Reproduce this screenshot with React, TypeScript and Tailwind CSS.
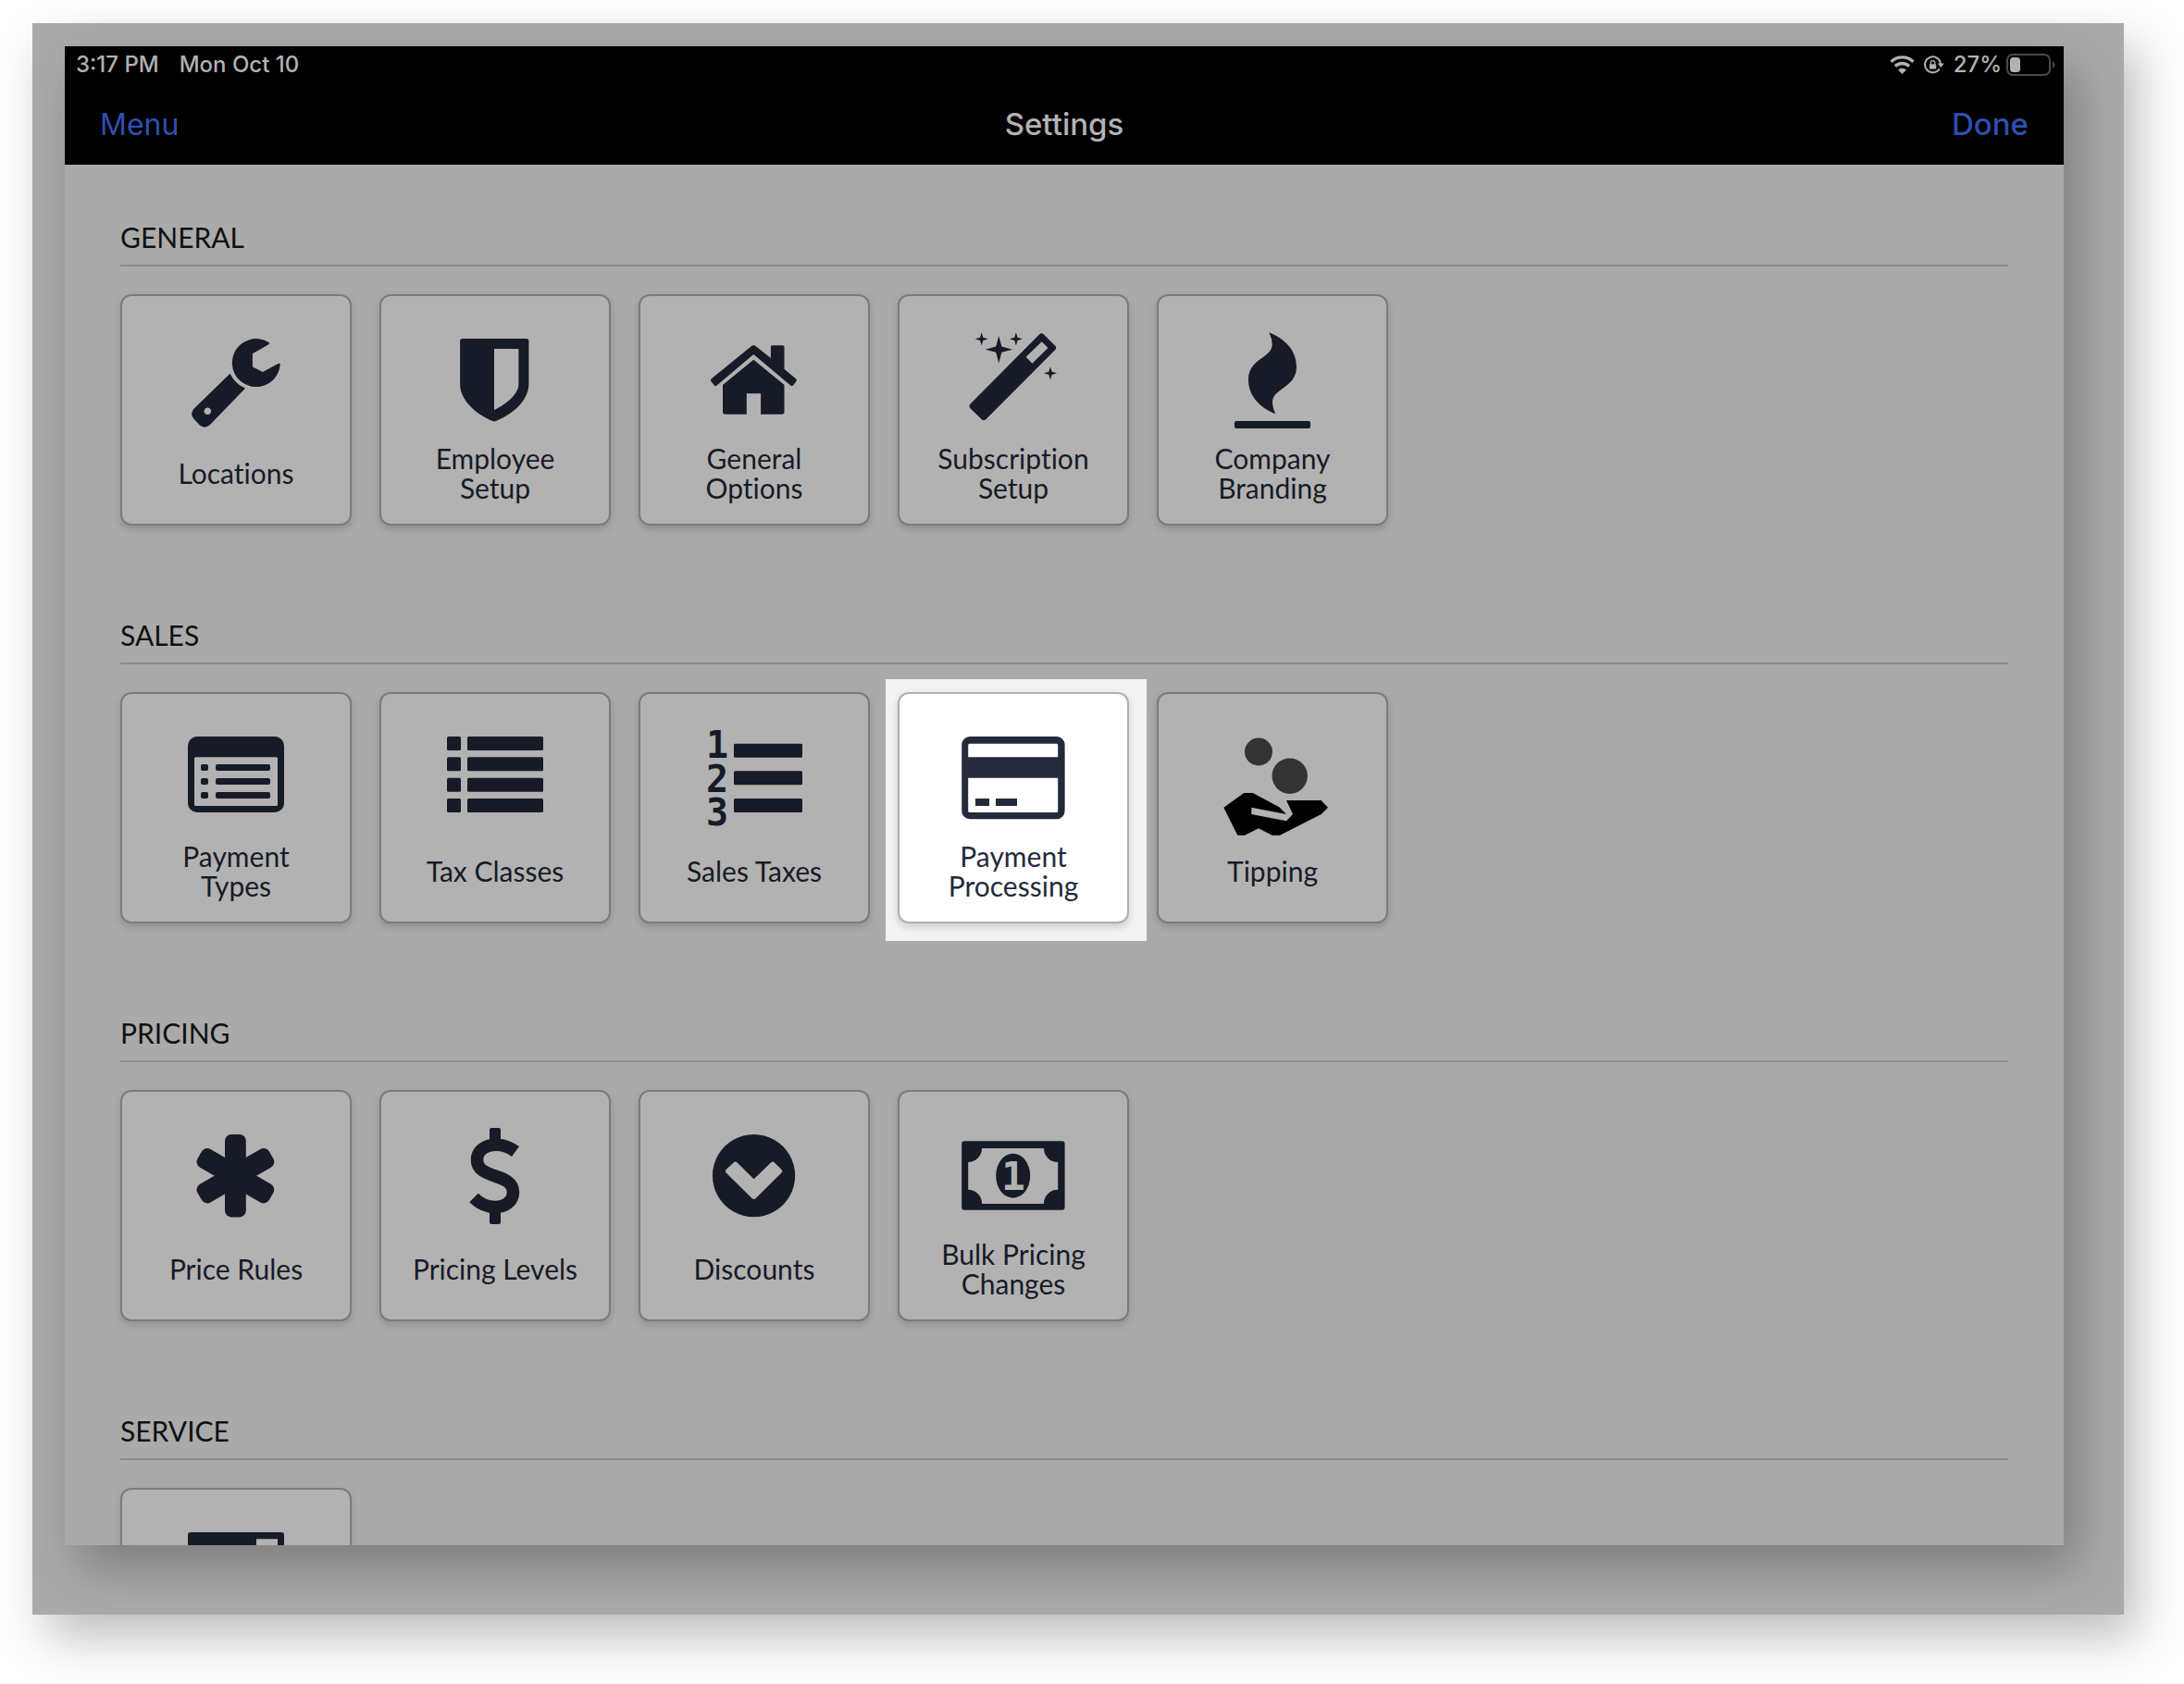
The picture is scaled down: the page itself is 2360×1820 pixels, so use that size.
import type { ReactNode } from "react";

type Tile = {
  id: string;
  label: string;
  icon: ReactNode;
  active?: boolean;
};

const Icon = ({ children }: { children: ReactNode }) => (
  <svg
    viewBox="0 0 120 120"
    fill="currentColor"
    aria-hidden="true"
    className="size-[120px] shrink-0 overflow-visible"
  >
    {children}
  </svg>
);

const Wrench = () => (
  <Icon>
    <path d="M95.3 19.9a26 26 0 1 0 12.4 24.4q.2-2.2-2-1.2L88.9 52l-11-5.6V32.3l17.4-10q1.6-1.2 0-2.4Z" />
    <path
      fillRule="evenodd"
      d="M53.6 53.7A32 32 0 0 0 70 69.7L32 109q-5.7 5-11.2.6l-6.3-6.8q-5-5.7.3-11.2ZM29.3 90.5a3.8 3.8 0 1 0 .1 0Z"
    />
  </Icon>
);

const Shield = () => (
  <Icon>
    <path
      fillRule="evenodd"
      d="M24.6 16h69.3a2.5 2.5 0 0 1 2.5 2.5V65c0 18-18 33-35.4 40q-1.8.8-3.6 0C40 98 22.1 83 22.1 65V18.5a2.5 2.5 0 0 1 2.5-2.5ZM59 27v66.3C71 87 85.4 77 85.4 65V27Z"
    />
  </Icon>
);

const Home = () => (
  <Icon>
    <path d="M56.5 24.4q2.8-2.2 5.6 0L77.9 37V25q0-1.7 1.7-1.7h11.2q1.7 0 1.7 1.7v24l12.8 10.6q1.2 1.2.2 2.5l-3.5 4.4q-1.2 1.3-2.5.2L59.3 33 19.4 66.7q-1.3 1-2.5-.2l-3.6-4.4q-.9-1.4.2-2.5Z" />
    <path d="M59.3 38.7 92.5 66v29q0 2.7-2.7 2.7H67.1V75.3H51.8v22.4H28.7Q26 97.700 26 95V66Z" />
  </Icon>
);

const Wand = () => (
  <Icon>
    <path
      fillRule="evenodd"
      d="M88.3 11.2q2.2-2 4.3 0l12.7 12.6q1.8 2 0 4.3L30.3 103.2q-2.3 2-4.5 0L13.3 91.2q-1.8-2.2 0-4.4ZM90.7 19.3 73.6 35.7l6.8 7L97.5 26Z"
    />
    <path d="M44.3 13 47.4 24.6 59 27.7 47.4 30.8 44.3 42.4 41.2 30.8 29.7 27.7 41.2 24.6Z" />
    <path d="M25.7 9.2 27.3 14.7 32.8 16.3 27.3 17.9 25.7 23.4 24.1 17.9 18.6 16.3 24.1 14.7Z" />
    <path d="M62.9 9.2 64.5 14.7 70 16.3 64.5 17.9 62.9 23.4 61.3 17.9 55.8 16.3 61.3 14.7Z" />
    <path d="M100 46.2 101.6 51.7 107.1 53.3 101.6 54.9 100 60.4 98.4 54.9 92.9 53.3 98.4 51.7Z" />
  </Icon>
);

const Flame = () => (
  <Icon>
    <path d="M56.3 9.3C71 15 86 27 86 46.5 86 69 60 70 60 84.5q0 5.500 3.300 12.800C49 92 34 79.500 34 60.500 34 37 59.700 37.500 59.700 22q0-6-3.400-12.700Z" />
    <rect x="19" y="105" width="82" height="8" rx="2" />
  </Icon>
);

const ListWindow = () => (
  <Icon>
    <path
      fillRule="evenodd"
      d="M18 16h84a10 10 0 0 1 10 10v62a10 10 0 0 1-10 10H18A10 10 0 0 1 8 88V26a10 10 0 0 1 10-10ZM16.5 38.3q-1.5 0-1.5 1.5v49.7q0 1.5 1.5 1.5h87q1.5 0 1.5-1.5V39.8q0-1.5-1.5-1.5Z"
    />
    {[46, 61, 76].map((y) => (
      <g key={y}>
        <rect x="22" y={y} width="8" height="7" rx="2" />
        <rect x="38" y={y} width="59" height="7" rx="2" />
      </g>
    ))}
  </Icon>
);

const List = () => (
  <Icon>
    {[16, 38.3, 60.7, 83].map((y) => (
      <g key={y}>
        <rect x="8" y={y} width="15" height="15" rx="1.5" />
        <rect x="30" y={y} width="82" height="15" rx="1.5" />
      </g>
    ))}
  </Icon>
);

const NumberedList = () => (
  <Icon>
    <text
      textAnchor="middle"
      className="font-['DejaVu_Sans_Mono',monospace] text-[40px] font-bold"
    >
      <tspan x="20" y="39">1</tspan>
      <tspan x="20" y="76">2</tspan>
      <tspan x="20" y="112">3</tspan>
    </text>
    {[23.7, 53.3, 83].map((y) => (
      <rect key={y} x="38" y={y} width="74" height="15" rx="1.5" />
    ))}
  </Icon>
);

const CreditCard = () => (
  <Icon>
    <path
      fillRule="evenodd"
      d="M13 16h94a9 9 0 0 1 8.6 9v71.3a9 9 0 0 1-8.6 9H13a9 9 0 0 1-8.8-9V25A9 9 0 0 1 13 16ZM12.7 23.7q-1.5 0-1.5 1.5v13.1h97V25.2q0-1.5-1.5-1.5ZM11.2 60.7v35.8q0 1.5 1.5 1.5h94q1.5 0 1.5-1.5V60.7Z"
    />
    <rect x="19" y="83" width="15" height="8" />
    <rect x="41" y="83" width="23" height="8" />
  </Icon>
);

const Tipping = () => (
  <Icon>
    <circle cx="45" cy="32.5" r="15" fill="#333333" />
    <circle cx="78.7" cy="58.7" r="19.2" fill="#333333" />
    <path
      fill="#000000"
      d="M7.3 92.7 29.3 77h9.4l28.6 15.3L75 100 37.3 92.7v7.3L75 107.3l7-7.3-7-15h37.7l7.3 7.7-7.3 7.3-44.7 22.7h-8.3l-14.7-7.4-15 7.4h-7.7Z"
    />
  </Icon>
);

const Asterisk = () => (
  <Icon>
    {[0, 60, 120].map((deg) => (
      <rect
        key={deg}
        x="48"
        y="16"
        width="22.8"
        height="89.4"
        rx="7"
        transform={`rotate(${deg} 59.4 60.7)`}
      />
    ))}
  </Icon>
);

const Dollar = () => (
  <Icon>
    <rect x="54" y="9" width="12" height="18" rx="2" />
    <rect x="54" y="95" width="12" height="18" rx="2" />
    <path
      d="M82 34.500C76 30 69 27.200 61 27.200 49 27.200 40.500 34 40.500 43.500 40.500 65 79.500 57 79.500 78.500 79.500 88 71.500 94.500 60 94.500 50.500 94.500 43 90.500 37 84.500"
      fill="none"
      stroke="currentColor"
      strokeWidth="13.5"
    />
  </Icon>
);

const ChevronCircle = () => (
  <Icon>
    <path
      fillRule="evenodd"
      d="M59.5 16a44.6 44.6 0 1 0 .1 0ZM37.8 46.4q1.9-2 3.8 0L59.6 64.3 78 46.4q2-2 3.9 0L89.5 54q1.5 1.8 0 3.5L61.5 85.3q-1.9 1.6-3.8 0L29.6 57.500q-1.500-1.700 0-3.500Z"
    />
  </Icon>
);

const Banknote = () => (
  <Icon>
    <path
      fillRule="evenodd"
      d="M7.2 23.3h105.4q3 0 3 3v68.4q0 3-3 3H7.2q-3 0-3-3V26.3q0-3 3-3ZM26 31a15 15 0 0 1-14.8 15v29.7A15 15 0 0 1 26 91h67a15 15 0 0 1 15.2-15.3V46A15 15 0 0 1 93 31Z"
    />
    <ellipse cx="59.7" cy="60.7" rx="18.5" ry="24" />
    <text
      x="60"
      y="76"
      textAnchor="middle"
      className="fill-[#b2b2b2] font-['DejaVu_Sans_Mono',monospace] text-[43px] font-bold"
    >
      1
    </text>
  </Icon>
);

const Panel = () => (
  <Icon>
    <path
      fillRule="evenodd"
      d="M11 16h98q3 0 3 3v76q0 3-3 3H11q-3 0-3-3V19q0-3 3-3ZM82 23.3V46h23V23.3Z"
    />
  </Icon>
);

const sections: { title: string; tiles: Tile[] }[] = [
  {
    title: "General",
    tiles: [
      { id: "locations", label: "Locations", icon: <Wrench /> },
      { id: "employee", label: "Employee Setup", icon: <Shield /> },
      { id: "options", label: "General Options", icon: <Home /> },
      { id: "subscription", label: "Subscription Setup", icon: <Wand /> },
      { id: "branding", label: "Company Branding", icon: <Flame /> },
    ],
  },
  {
    title: "Sales",
    tiles: [
      { id: "payment-types", label: "Payment Types", icon: <ListWindow /> },
      { id: "tax-classes", label: "Tax Classes", icon: <List /> },
      { id: "sales-taxes", label: "Sales Taxes", icon: <NumberedList /> },
      {
        id: "processing",
        label: "Payment Processing",
        icon: <CreditCard />,
        active: true,
      },
      { id: "tipping", label: "Tipping", icon: <Tipping /> },
    ],
  },
  {
    title: "Pricing",
    tiles: [
      { id: "price-rules", label: "Price Rules", icon: <Asterisk /> },
      { id: "levels", label: "Pricing Levels", icon: <Dollar /> },
      { id: "discounts", label: "Discounts", icon: <ChevronCircle /> },
      { id: "bulk", label: "Bulk Pricing Changes", icon: <Banknote /> },
    ],
  },
  {
    title: "Service",
    tiles: [{ id: "service", label: "", icon: <Panel /> }],
  },
];

const tileBase =
  "relative flex size-[250px] flex-col items-center rounded-xl border-2 px-6 pt-[30px] pb-[14px] text-center text-[30px] leading-8 shadow-[0_4px_8px_rgba(0,0,0,0.16)]";

function SettingsTile({ id, label, icon, active }: Tile) {
  return (
    <div className="relative">
      {active && (
        <span className="absolute -top-[14px] -right-[19px] -bottom-[19px] -left-[13px] bg-[#f3f3f3]" />
      )}
      <button
        type="button"
        aria-label={label || id}
        className={
          active
            ? `${tileBase} border-[#a9b2b0] bg-white text-[#242a3b]`
            : `${tileBase} border-[#777d7b] bg-[#b2b2b2] text-[#171b27]`
        }
      >
        {icon}
        <span className="flex flex-1 items-center">{label}</span>
      </button>
    </div>
  );
}

function StatusBar() {
  return (
    <div className="flex h-10 items-center justify-between pr-2 pl-3 text-2xl font-medium text-[#b2b2b2]">
      <div className="flex gap-[22px]">
        <span>3:17 PM</span>
        <span>Mon Oct 10</span>
      </div>
      <div className="flex items-center">
        <svg width="27" height="20" viewBox="0 0 27 20" fill="none" aria-hidden="true">
          <path
            d="M1.5 6.8a17 17 0 0 1 24 0M5.9 11.6a10.7 10.7 0 0 1 15.2 0"
            stroke="currentColor"
            strokeWidth="3.4"
          />
          <path d="M9 15.5a6.4 6.4 0 0 1 9 0L13.5 20Z" fill="currentColor" />
        </svg>
        <svg
          width="22"
          height="20"
          viewBox="0 0 22 20"
          fill="none"
          aria-hidden="true"
          className="ml-[10px]"
        >
          <path
            d="M16.8 14.3A8.5 8.5 0 1 1 18 9"
            stroke="currentColor"
            strokeWidth="2"
          />
          <path d="M14.8 8.6h7L18.3 13Z" fill="currentColor" />
          <path d="M6 9.3h7.2v5.2H6Z" fill="currentColor" />
          <path d="M7.4 9.5V7.8a2.2 2.2 0 0 1 4.400 0v1.700" stroke="currentColor" strokeWidth="1.3" />
        </svg>
        <span className="ml-[10px]">27%</span>
        <svg
          width="54"
          height="24"
          viewBox="0 0 54 24"
          fill="none"
          aria-hidden="true"
          className="ml-[5px]"
        >
          <rect x="1" y="1" width="46" height="22" rx="6" stroke="#4a4a4a" strokeWidth="2" />
          <rect x="4" y="4" width="11" height="16" rx="3.5" fill="currentColor" />
          <path d="M50 8a4.5 4.5 0 0 1 0 8Z" fill="#4a4a4a" />
        </svg>
      </div>
    </div>
  );
}

export default function App() {
  return (
    <div className="h-screen bg-white pt-[25px] pr-[65px] pb-[75px] pl-[35px]">
      <div className="h-full bg-[#aaaaaa] pt-[25px] pr-[65px] pb-[75px] pl-[35px] shadow-[15px_25px_50px_rgba(0,0,0,0.26)]">
        <div className="flex h-full flex-col bg-[#aaaaaa] shadow-[15px_25px_50px_rgba(0,0,0,0.26)]">
          <header className="bg-black font-[Inter,sans-serif]">
            <StatusBar />
            <nav className="grid h-[88px] grid-cols-3 items-center px-[38px] pt-0.5 text-[33px]">
              <button
                type="button"
                className="justify-self-start text-[32px] text-[#2f4fb0]"
              >
                Menu
              </button>
              <h1 className="text-center font-medium text-[#b2b2b2]">Settings</h1>
              <button
                type="button"
                className="justify-self-end font-medium text-[#2f4fb0]"
              >
                Done
              </button>
            </nav>
          </header>
          <main className="flex min-h-0 flex-1 flex-col gap-[100px] overflow-hidden px-[60px] pt-[60px] font-[Lato,sans-serif] [font-variant-ligatures:none]">
            {sections.map(({ title, tiles }) => (
              <section key={title}>
                <h2 className="border-b-2 border-[#868c8a] pb-3 text-[30px] leading-9 text-[#101010] uppercase">
                  {title}
                </h2>
                <div className="flex flex-wrap gap-[30px] pt-[30px]">
                  {tiles.map((tile) => (
                    <SettingsTile key={tile.id} {...tile} />
                  ))}
                </div>
              </section>
            ))}
          </main>
        </div>
      </div>
    </div>
  );
}
